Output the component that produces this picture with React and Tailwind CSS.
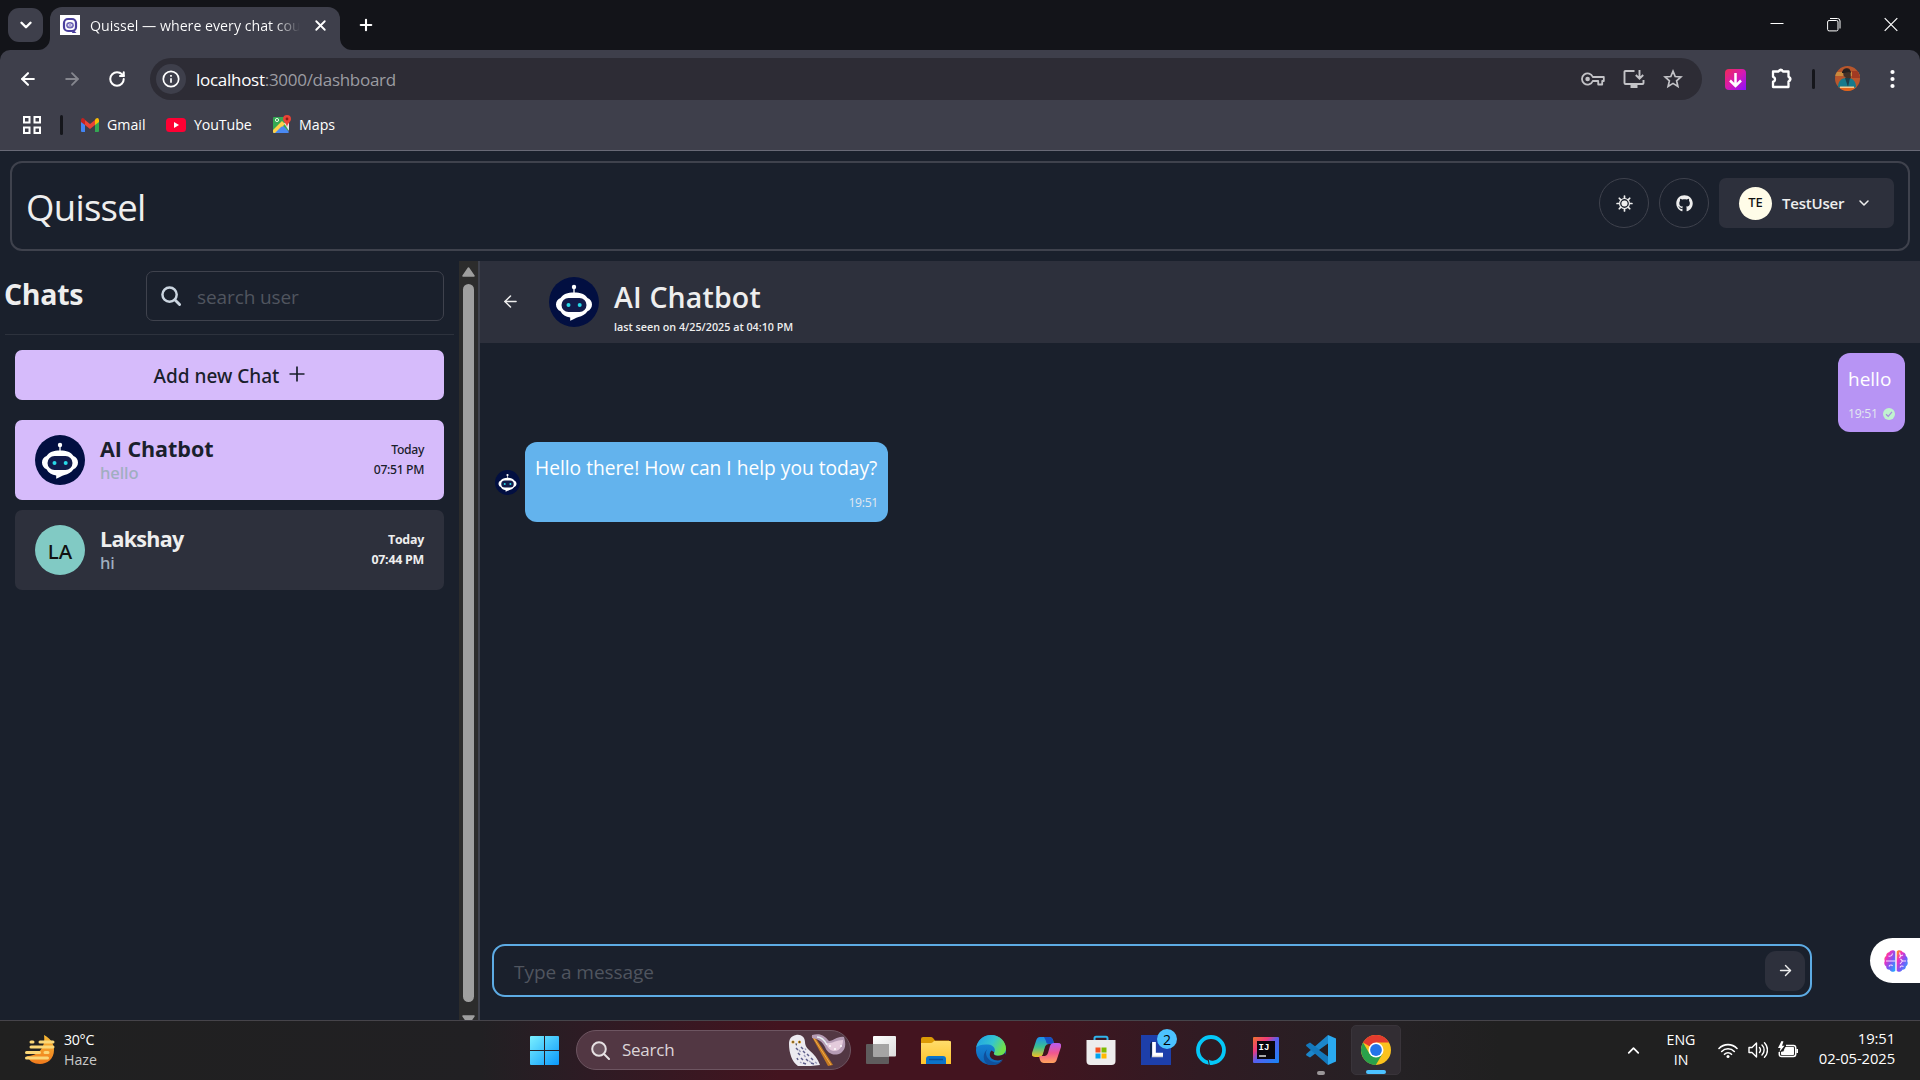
import { FaGithub } from "react-icons/fa";
import { ArrowLeft, ArrowRight, RotateCw, Plus, X, ChevronDown, ChevronUp } from "lucide-react";

function Bot({ className }) {
  return (
    <svg viewBox="0 0 50 50" className={className}>
      <circle cx="25" cy="25" r="25" fill="#020f41" />
      <circle cx="25" cy="10" r="2.2" fill="#fff" />
      <path d="M25 11v6" stroke="#fff" strokeWidth="1.3" />
      <path d="M25 15.5c6.500 0 11 1.700 13.500 5.500 2.700.800 4.500 3.500 4.500 6.500s-1.800 5.700-4.500 6.700C36.200 37.700 33 39 29.500 40c-3 1-5 2.200-8.300 3.700v-3.200c-4.500-.600-7.800-2.700-9.700-6.300C8.800 33.200 7 30.500 7 27.500s1.800-5.700 4.500-6.500c2.500-3.800 7-5.500 13.500-5.500z" fill="#fff" />
      <rect x="12.500" y="21" width="25" height="14" rx="7" fill="#121b4b" />
      <circle cx="19.500" cy="28" r="2" fill="#27d9e8" />
      <circle cx="30.700" cy="28" r="2" fill="#27d9e8" />
    </svg>
  );
}

function TabStrip() {
  return (
    <div className="flex h-[50px] items-start bg-[#131419]">
      <div className="ml-2 mt-2 flex h-[34px] w-[35px] items-center justify-center rounded-[11px] bg-[#3e3f4b]">
        <ChevronDown size={18} strokeWidth={3.200} />
      </div>
      <div className="relative ml-[7px] mt-[7px] flex h-[43px] w-[290px] items-center rounded-t-[12px] bg-[#3e3f4b] pb-[7px] pl-[10px]">
        <svg className="absolute -left-3 bottom-0" width="12" height="12"><path d="M12 0v12H0A12 12 0 0 0 12 0z" fill="#3e3f4b" /></svg>
        <svg className="absolute -right-3 bottom-0" width="12" height="12"><path d="M0 0v12h12A12 12 0 0 1 0 0z" fill="#3e3f4b" /></svg>
        <svg width="20" height="20" viewBox="0 0 20 20">
          <rect width="20" height="20" fill="#fff" />
          <rect x="4" y="4" width="12" height="12" rx="4" fill="none" stroke="#4a3f9d" strokeWidth="2.200" />
          <path d="M13 14.500l3.500 3.500h-4.500z" fill="#4a3f9d" />
          <ellipse cx="10" cy="10.200" rx="3.800" ry="3.200" fill="#6a60b5" />
          <path d="M8.300 9v2.400M10 8.200v4M11.700 9v2.400" stroke="#fff" strokeWidth=".9" />
        </svg>
        <span className="ml-[10px] mt-0.5 w-[210px] whitespace-nowrap bg-gradient-to-r from-white from-88% to-transparent bg-clip-text text-[14.200px] leading-5 text-transparent">
          Quissel — where every chat cou
        </span>
        <X size={17} strokeWidth={2.600} className="ml-[12px]" />
      </div>
      <Plus size={18} strokeWidth={2.800} className="ml-[17px] mt-4" />
      <div className="ml-auto mt-[17px] flex pr-[22px]">
        <svg width="14" height="14" viewBox="0 0 14 14" stroke="#fff" fill="none"><path d="M.5 6.500h13" /></svg>
        <svg className="ml-[43px]" width="14" height="15" viewBox="0 0 14 15" stroke="#fff" fill="none">
          <rect x=".6" y="3.500" width="10.400" height="10.400" rx="1.500" /><path d="M3 1.500h7.500a2.500 2.500 0 0 1 2.500 2.500v7.500" />
        </svg>
        <svg className="ml-[43px]" width="14" height="15" viewBox="0 0 14 15" stroke="#fff" strokeWidth="1.200"><path d="M.7 1.200l12.600 12.600M13.300 1.200L.7 13.800" /></svg>
      </div>
    </div>
  );
}

function Toolbar() {
  return (
    <div className="flex h-[58px] items-center rounded-t-[10px] bg-[#3e3f4b]">
      <ArrowLeft size={20} strokeWidth={2.500} className="ml-[18px]" />
      <ArrowRight size={20} strokeWidth={2.200} className="ml-[24px] text-[#85868e]" />
      <RotateCw size={18} strokeWidth={2.700} className="ml-[26px]" />
      <div className="ml-[24px] flex h-[42px] w-[1552px] items-center rounded-full bg-[#2d2c35] pl-1.5 pr-[19px]">
        <div className="flex h-[30px] w-[30px] items-center justify-center rounded-full bg-[#3e3f4b]">
          <svg width="18" height="18" viewBox="0 0 18 18" fill="none" stroke="#fff" strokeWidth="1.700"><circle cx="9" cy="9" r="7.700" /><path d="M9 8.200v4.500M9 5v1.700" /></svg>
        </div>
        <span className="ml-[10px] mt-px text-[17px] tracking-[-0.28px] text-[#9c9ca2]"><span className="text-white">localhost</span>:3000/dashboard</span>
        <div className="ml-auto flex items-center gap-[18px] text-[#c3c3c7]">
          <svg width="24" height="16" viewBox="0 0 24 16" fill="none" stroke="currentColor" strokeWidth="1.800"><path d="M11.800 6h11v4h-1.600v3.500h-4V10h-5.400A5.600 5.600 0 1 1 11.800 6z" strokeLinejoin="round" /><circle cx="6.600" cy="8" r="2.300" fill="currentColor" stroke="none" /></svg>
          <svg width="22" height="20" viewBox="0 0 22 20" fill="none" stroke="currentColor" strokeWidth="1.900"><path d="M11.500 2H2.500q-1 0-1 1v11q0 1 1 1h17q1 0 1-1v-3M16.500 1v8M12.800 6l3.700 3.700L20.200 6" /><path d="M7.500 17.500h7" strokeWidth="3" /></svg>
          <svg width="20" height="20" viewBox="0 0 20 20" fill="none" stroke="currentColor" strokeWidth="1.700"><path d="M10 2.200l2.200 5.300 5.700.5-4.300 3.800 1.300 5.600-4.900-3-4.900 3 1.300-5.600L2.100 8l5.700-.5z" /></svg>
        </div>
      </div>
      <svg className="ml-[23px]" width="21" height="21" viewBox="0 0 21 21">
        <defs><linearGradient id="dl" x1="0" y1="0" x2="1" y2="1"><stop offset="0" stopColor="#f02a55" /><stop offset=".5" stopColor="#d81ab0" /><stop offset="1" stopColor="#8a10ff" /></linearGradient></defs>
        <path d="M4 0h13q4 0 4 4v17H4q-4 0-4-4V4q0-4 4-4z" fill="url(#dl)" />
        <path d="M10.500 4v12M5 11.500l5.500 5.500 5.500-5.500" fill="none" stroke="#fff" strokeWidth="2.500" />
      </svg>
      <svg className="ml-[25px] mb-0.5" width="22" height="22" viewBox="0 0 22 22" fill="none" stroke="#fff" strokeWidth="2.300" strokeLinejoin="round">
        <path d="M2 4.500h5.500a2.500 2.500 0 0 1 4.500 0h5.500v5.300a2.300 2.300 0 0 1 0 4.500V20H2v-5.300a2.500 2.500 0 0 0 0-4.900z" />
        <path d="M8 3.500a2 2 0 0 1 3.600 0zM18.500 10.300a2 2 0 0 1 0 3.500z" fill="#fff" strokeWidth="1.500" />
      </svg>
      <div className="ml-[19px] h-[20px] w-[3px] rounded bg-[#15161b]" />
      <svg className="mb-0.5 ml-[20px]" width="25" height="25" viewBox="0 0 25 25">
        <clipPath id="av"><circle cx="12.500" cy="12.500" r="12.500" /></clipPath>
        <g clipPath="url(#av)">
          <rect width="25" height="25" fill="#b8562c" />
          <path d="M0 6h25v4H0z" fill="#c98a3e" /><path d="M17 5h8v7h-8z" fill="#a13a22" />
          <path d="M3 22c0-7 3-10 9-10s9 3 9 10z" fill="#157a8b" />
          <circle cx="12" cy="8" r="4" fill="#8a5a3c" /><path d="M7 7c0-5 9-6 9 0l-2-1-5 1z" fill="#1c1a1f" />
          <path d="M8 5c0-4 8-4 7 0l1 7-3 2-4-4z" fill="#2a2320" opacity=".75" />
          <path d="M10 12l3 9 2-9z" fill="#1d3e4b" /><path d="M0 21.500h25V25H0z" fill="#e0641b" /><path d="M5 20.500h14v1.500H5z" fill="#f0c88f" />
        </g>
      </svg>
      <svg className="ml-[30px]" width="5" height="20" viewBox="0 0 5 20" fill="#fff"><circle cx="2.500" cy="3" r="2.100" /><circle cx="2.500" cy="10" r="2.100" /><circle cx="2.500" cy="17" r="2.100" /></svg>
    </div>
  );
}

function Bookmarks() {
  return (
    <div className="flex h-[43px] items-center border-b border-[#686976] bg-[#3e3f4b] pb-[8px] text-[14.200px]">
      <svg className="ml-[23px]" width="18" height="18" viewBox="0 0 18 18" fill="none" stroke="#fff" strokeWidth="2"><path d="M1 1h5.500v5.500H1zM11.500 1H17v5.500h-5.500zM1 11.500h5.500V17H1zM11.500 11.500H17V17h-5.500z" /></svg>
      <div className="ml-[19px] h-[20px] w-[3px] rounded bg-[#15161b]" />
      <svg className="ml-[18px]" width="18" height="14" viewBox="0 0 18 14">
        <path d="M0 2.500l4 3V14H1q-1 0-1-1z" fill="#4285f4" /><path d="M18 2.500l-4 3V14h3q1 0 1-1z" fill="#34a853" />
        <path d="M4 2l5 4 5-4v5l-5 4-5-4z" fill="#ea4335" /><path d="M0 2q.5-3 3-1.500L4 1.500V7L0 4z" fill="#c5221f" /><path d="M18 2q-.5-3-3-1.500l-1 1V7l4-3z" fill="#fbbc04" />
      </svg>
      <span className="ml-[8px] w-[38px] whitespace-nowrap">Gmail</span>
      <svg className="ml-[21px]" width="20" height="14" viewBox="0 0 20 14"><rect width="20" height="14" rx="3.500" fill="#ff0033" /><path d="M8 4l5 3-5 3z" fill="#fff" /></svg>
      <span className="ml-[8px] w-[57px] whitespace-nowrap tracking-[-0.1px]">YouTube</span>
      <svg className="ml-[22px] mb-0.5" width="18" height="18" viewBox="0 0 18 18">
        <path d="M0 3q0-1 1-1h14v15q0 1-1 1H1q-1 0-1-1z" fill="#34a853" /><path d="M8.500 9L16 17q0 1-2 1H1z" fill="#4a89f3" /><path d="M0 15l9-9 3 3-9 9H1q-1 0-1-1z" fill="#ffd04b" /><path d="M2 18l6.500-6.500L15 18z" fill="#4a89f3" /><path d="M11 8l5-1v9z" fill="#e8eaed" />
        <path d="M14 0a4 4 0 0 1 4 4c0 3-3.500 4-4 8-.5-4-4-5-4-8a4 4 0 0 1 4-4z" fill="#ea4335" /><circle cx="14" cy="4" r="1.400" fill="#8c1d18" /><circle cx="4" cy="5" r="1.600" fill="none" stroke="#e8f5e9" />
      </svg>
      <span className="ml-[8px]">Maps</span>
    </div>
  );
}

function Header() {
  return (
    <div className="mx-[10px] mt-[10px] flex h-[90px] items-center rounded-[12px] border-2 border-[#3f424d] pl-[14px] pr-[14px]">
      <h1 className="mt-[3px] text-[36.500px] leading-none tracking-[-0.7px] text-[#eeeeee]">Quissel</h1>
      <div className="mb-[6px] ml-auto flex h-[50px] w-[50px] items-center justify-center rounded-full border border-[#3f424d]">
        <svg width="17" height="17" viewBox="0 0 24 24" fill="#eee" stroke="#eee" strokeWidth="2.400" strokeLinecap="round">
          <circle cx="12" cy="12" r="4.300" stroke="none" /><circle cx="12" cy="12" r="7" fill="none" strokeWidth="1.600" />
          <path d="M12 1.500v3M12 19.500v3M1.500 12h3M19.500 12h3M4.600 4.600l2 2M17.400 17.400l2 2M4.600 19.400l2-2M17.400 6.600l2-2" />
        </svg>
      </div>
      <div className="mb-[6px] ml-[10px] flex h-[50px] w-[50px] items-center justify-center rounded-full border border-[#3f424d] text-[#eee]"><FaGithub size={17} /></div>
      <div className="mb-[6px] ml-[10px] flex h-[50px] w-[175px] items-center rounded-[7px] bg-[#2d303c] pl-5">
        <div className="flex h-[33px] w-[33px] items-center justify-center rounded-full bg-[#fffce8] font-['Noto_Sans'] text-[13px] font-medium text-[#111]">TE</div>
        <span className="ml-[10px] w-[74px] text-[15px] font-semibold tracking-[-0.2px] text-[#eee]">TestUser</span>
        <ChevronDown size={16} strokeWidth={2.300} className="text-[#eee]" />
      </div>
    </div>
  );
}

function ChatRow({ active, avatar, name, nameClass, text, time }) {
  return (
    <div className={"mx-[15px] flex h-[80px] items-center rounded-[7px] px-[20px] " + (active ? "bg-[#d6bbfb] text-[#1a202c]" : "bg-[#2d303c] text-[#eeeeee]")}>
      {avatar}
      <div className="mb-[2px] ml-[15px]">
        <div className={"text-[21.500px] font-bold leading-[27px] " + nameClass}>{name}</div>
        <div className="font-['Noto_Sans'] text-[16.600px] font-medium leading-[22px] tracking-[-0.1px] text-[#a0aec0]">{text}</div>
      </div>
      <div className={"ml-auto text-right leading-[20px] " + (active ? "font-['Noto_Sans'] text-[12.200px] font-medium tracking-[-0.35px]" : "text-[12.400px] font-bold tracking-[-0.25px]")}>
        <div>Today</div>
        <div>{time}</div>
      </div>
    </div>
  );
}

function Sidebar() {
  return (
    <div className="flex w-[480px] border-r-2 border-[#3f424d]">
      <div className="w-[459px]">
        <div className="ml-[5px] mr-[5px] flex h-[74px] items-center justify-between border-b border-[#2d323d] pb-[4px] pr-[10px]">
          <h2 className="-ml-px mb-[2px] text-[28.500px] font-bold tracking-[-0.3px] text-[#eeeeee]">Chats</h2>
          <div className="flex h-[50px] w-[298px] items-center rounded-[7px] border border-[#3f424d] pl-[14px]">
            <svg width="20" height="20" viewBox="0 0 21 21" fill="none" stroke="#cbd5e0" strokeWidth="2.600" strokeLinecap="round"><circle cx="9" cy="9" r="7.500" /><path d="M14.500 14.500l5 5" strokeWidth="3" /></svg>
            <span className="ml-4 mt-[4px] text-[19px] tracking-[-0.1px] text-[#50555f]">search user</span>
          </div>
        </div>
        <div className="mx-[15px] mb-5 mt-[15px] flex h-[50px] items-center justify-center gap-[10px] rounded-[7px] bg-[#d6bbfb] font-['Noto_Sans'] text-[19px] font-medium text-[#1a202c]">
          <span className="mt-[2px]">Add new Chat</span>
          <svg width="16" height="16" viewBox="0 0 16 16" stroke="#1a202c" strokeWidth="1.700" className="mb-0.5"><path d="M8 .5v15M.5 8h15" /></svg>
        </div>
        <ChatRow active avatar={<Bot className="h-[50px] w-[50px]" />} name="AI Chatbot" nameClass="tracking-[-0.05px]" text="hello" time="07:51 PM" />
        <div className="h-[10px]" />
        <ChatRow avatar={<div className="flex h-[50px] w-[50px] items-center justify-center rounded-full bg-[#81cac4] pt-0.5 font-['Noto_Sans'] text-[20.500px] font-medium text-[#111]">LA</div>} name="Lakshay" nameClass="tracking-[-0.7px]" text="hi" time="07:44 PM" />
      </div>
      <div className="flex w-[19px] flex-col items-center overflow-hidden bg-[#2c2c2c]">
        <svg className="mt-[6px] shrink-0" width="13" height="10" viewBox="0 0 13 10"><path d="M6.500 1L12 9H1z" fill="#9f9f9f" stroke="#9f9f9f" strokeLinejoin="round" strokeWidth="1.500" /></svg>
        <div className="mt-[7px] h-[718px] w-[11px] shrink-0 rounded-full bg-[#9f9f9f]" />
        <svg className="mt-[13px] shrink-0" width="13" height="10" viewBox="0 0 13 10"><path d="M6.500 9L12 1H1z" fill="#9f9f9f" stroke="#9f9f9f" strokeLinejoin="round" strokeWidth="1.500" /></svg>
      </div>
    </div>
  );
}

function Brain() {
  return (
    <svg width="24" height="22" viewBox="0 0 24 22" className="shrink-0">
      <defs><linearGradient id="br" x1="0" y1="0" x2="1" y2="1"><stop offset=".08" stopColor="#ff8a2a" /><stop offset=".28" stopColor="#f52fbb" /><stop offset=".58" stopColor="#7b55f6" /><stop offset="1" stopColor="#18b4ff" /></linearGradient></defs>
      <path d="M11.300 1.500v19.200c-1.200 1.600-4.500 1.600-5.600-.9-2 .2-3.700-1.300-3.500-3.300C.3 15.500-.3 13 .8 11 -.1 9 .5 6.800 2.200 6 2 3.800 3.500 2.300 5.200 2.200 6.300-.2 10 -.5 11.300 1.500z" fill="url(#br)" />
      <path d="M12.700 1.500v19.200c1.200 1.600 4.500 1.600 5.600-.9 2 .2 3.700-1.300 3.500-3.300 1.900-1 2.500-3.500 1.400-5.500.9-2 .3-4.200-1.400-5 .2-2.200-1.300-3.700-3-3.800C17.700-.2 14 -.5 12.700 1.500z" fill="url(#br)" />
      <path d="M2 11h9.500M8.500 3.500C8 6 6 6.500 4.500 6M5 16.500c.5-2 3-2 3.500-.5M15.500 2.500l1 3.500 2.500-1M16.500 6l-1 2M22 11h-3.500l-2-2M18.500 11l-2.500 3M19.500 16.500c-1.500-1-3-.5-3.500 1" fill="none" stroke="#f7dcff" strokeWidth="1.100" />
    </svg>
  );
}

function Conversation() {
  return (
    <div className="flex flex-1 flex-col">
      <div className="flex h-[82px] items-start bg-[#2d303c]">
        <ArrowLeft size={19} strokeWidth={1.900} className="ml-[21px] mt-[31px] text-[#eee]" />
        <Bot className="ml-[29px] mt-4 h-[50px] w-[50px]" />
        <div className="ml-[15px] mt-[17px]">
          <div className="text-[28.500px] font-semibold leading-[38px] tracking-[0.15px] text-[#eeeeee]">AI Chatbot</div>
          <div className="mt-[4px] text-[10.750px] font-semibold leading-[14px] text-[#eeeeee]">last seen on 4/25/2025 at 04:10 PM</div>
        </div>
      </div>
      <div className="flex flex-1 flex-col">
        <div className="mr-[15px] mt-[10px] flex h-[79px] w-[67px] flex-col self-end rounded-[12px] bg-[#b794f4] px-[10px] pt-[13px] text-white">
          <div className="text-[19px] leading-[26px]">hello</div>
          <div className="mt-[13px] flex items-center gap-[5px] whitespace-nowrap text-[12.200px] leading-[18px] tracking-[-0.3px] text-[#e2e8f0]">
            19:51
            <svg width="12" height="12" viewBox="0 0 12 12" className="shrink-0"><circle cx="6" cy="6" r="6" fill="#c0f3cf" /><path d="M3 6.300l2.200 2L9 3.800" fill="none" stroke="#a98be0" strokeWidth="1.200" /></svg>
          </div>
        </div>
        <div className="ml-[15px] mt-[10px] flex items-center">
          <Bot className="mt-[1px] h-[25px] w-[25px]" />
          <div className="ml-[5px] h-[80px] w-[363px] whitespace-nowrap rounded-[12px] bg-[#63b3ed] px-[10px] pt-[13px] text-white">
            <div className="text-[19.200px] leading-[26px]">Hello there! How can I help you today?</div>
            <div className="mt-[13px] text-right text-[12.200px] leading-[18px] tracking-[-0.3px] text-[#e2e8f0]">19:51</div>
          </div>
        </div>
        <div className="mb-[17px] mt-auto flex items-center justify-between">
          <div className="ml-[12px] flex h-[53px] w-[1320px] items-center justify-between rounded-[13px] border-2 border-[#5dabe4] pl-[20px] pr-[5px]">
            <span className="mt-1 text-[19px] tracking-[-0.05px] text-[#50555f]">Type a message</span>
            <div className="flex h-[40px] w-[40px] items-center justify-center rounded-[11px] bg-[#2d303c]"><ArrowRight size={17} strokeWidth={2} className="text-[#eee]" /></div>
          </div>
          <div className="mb-[20px] flex h-[45px] w-[50px] items-center rounded-l-full bg-white pl-[14px]">
            <Brain />
          </div>
        </div>
      </div>
    </div>
  );
}

const slot = "flex h-[50px] w-[50px] shrink-0 items-center justify-center";

function Taskbar() {
  return (
    <div className="flex h-[60px] items-center border-t border-[#46444a] pb-px bg-[linear-gradient(90deg,#202020_0px,#212023_480px,#2e1b24_590px,#43141f_780px,#43141f_1020px,#301b23_1200px,#242124_1400px,#202020_1500px)]">
      <div className="flex w-[530px] items-center">
        <svg className="ml-[24px]" width="32" height="32" viewBox="0 0 32 32">
          <defs><linearGradient id="mo" x1="0" y1="0" x2="0" y2="1"><stop offset="0" stopColor="#f6b935" /><stop offset="1" stopColor="#f07a1c" /></linearGradient></defs>
          <path d="M20 1c6 3 10 8 10 15 0 9-7 14-14 14-6 0-11-3-13-8 10 0 19-7 17-21z" fill="url(#mo)" />
          <path d="M7 8h2M16 8h13M7 13h22M2.500 18.500h13M21 18.500h3M2.500 24h21" stroke="#fbd777" strokeWidth="3" strokeLinecap="round" />
        </svg>
        <div className="ml-[8px] text-[14.200px] leading-[20px]">
          <div className="tracking-[-0.3px]">30°C</div>
          <div className="text-[#c8c8c8]">Haze</div>
        </div>
      </div>
      <svg width="29" height="29" viewBox="0 0 29 29">
        <defs><linearGradient id="wi" x1="0" y1="0" x2="1" y2="1"><stop offset="0" stopColor="#7af0ff" /><stop offset="1" stopColor="#0a98fb" /></linearGradient></defs>
        <path d="M1 0h13v14H0V1q0-1 1-1zM15 0h13q1 0 1 1v13H15zM0 15h14v14H1q-1 0-1-1zM15 15h14v13q0 1-1 1H15z" fill="url(#wi)" />
      </svg>
      <div className="ml-[17px] flex h-[40px] w-[275px] items-center rounded-full border border-[#6d5561] bg-[#523743] pl-[14px] pr-[3px]">
        <svg width="19" height="19" viewBox="0 0 19 19" fill="none" stroke="#e6e1e3" strokeWidth="2" strokeLinecap="round"><circle cx="8" cy="8" r="6.800" fill="#6c5560" /><path d="M13 13l5 5" /></svg>
        <span className="ml-[12px] text-[17px] tracking-[-0.25px] text-[#dcd5d8]">Search</span>
        <svg className="ml-auto mr-[1px]" width="58" height="33" viewBox="0 0 58 33">
          <path d="M8 1c5-1 9 2 9 7 0 3 1 5 4 8 5 4 9 9 11 15l-9 1H10C4 28 1 19 1 10c0-5 2-8 7-9z" fill="#eceaf0" />
          <path d="M8 14l2 2M13 13l2 2M10 19l2 2M15 17l2 2M19 20l2 2M13 24l2 2M18 25l2 2M23 24l2 2M23 29l3 1M15 29l3 1M9 24l1 2" stroke="#5d5d89" strokeWidth="1.500" />
          <path d="M11 16l1.500 2M16 21l1.500 2M21 27l2 1.500M12 28l1.500 1M27 28l2 1.500M17 14.500l1 1.500" stroke="#9c9cba" strokeWidth="1.300" />
          <circle cx="5" cy="8" r="1.600" fill="#e6a52b" /><circle cx="11.500" cy="8" r="1.600" fill="#e6a52b" /><circle cx="5" cy="8" r=".8" fill="#222" /><circle cx="11.500" cy="8" r=".8" fill="#222" /><path d="M7.300 9.500h2L8.200 12z" fill="#44404a" />
          <path d="M23.500 2l2.500-.5L45 31l-5 1z" fill="#c67a20" /><path d="M25 3l18 28" stroke="#f0ac4c" />
          <path d="M24 1c8-2 12 0 17 6 5 0 8-5 15-4 2 7 2 12-3 16-7 4-14 0-16-6-3-6-7-8-13-9z" fill="#b59cb5" /><path d="M38 9c6 1 10-3 17-3 0 6-3 11-9 11-4 0-7-4-8-8z" fill="#e4cbdc" /><path d="M29 3c5 0 8 4 10 8" stroke="#e6eef2" strokeWidth="1.500" fill="none" />
          <circle cx="47" cy="15" r="1" fill="#fff" /><circle cx="53" cy="12" r="1" fill="#fff" /><circle cx="42" cy="12" r=".9" fill="#fff" />
        </svg>
      </div>
      <div className="ml-[5px] flex items-center gap-[5px]">
        <div className={slot}>
          <svg width="30" height="28" viewBox="0 0 30 28">
            <defs><linearGradient id="tv" x1="0" y1="0" x2="1" y2="1"><stop offset="0" stopColor="#fff" /><stop offset="1" stopColor="#dcdcdc" /></linearGradient></defs>
            <rect y="8" width="23" height="20" rx="1" fill="#5f5c5d" /><rect x="7" width="23" height="20.500" rx="1" fill="url(#tv)" /><path d="M7 8h16v12.500H7z" fill="#a5a4a4" />
          </svg>
        </div>
        <div className={slot}>
          <svg width="30" height="27" viewBox="0 0 30 27">
            <defs><linearGradient id="fo" x1="0" y1="0" x2="0" y2="1"><stop offset="0" stopColor="#ffdc6b" /><stop offset="1" stopColor="#ffc42b" /></linearGradient></defs>
            <path d="M0 2q0-2 2-2h8q1 0 2 1l2 2.500H28V10H0z" fill="#dc9a06" /><path d="M0 6h10q1 0 2-1l1-1h16q1 0 1 1v22H0z" fill="url(#fo)" /><path d="M5 27v-5q0-3 3-3h14q3 0 3 3v5z" fill="#0b74cb" /><path d="M8 22.500h14" stroke="#0a4f98" strokeWidth="1.500" />
          </svg>
        </div>
        <div className={slot}>
          <svg width="30" height="30" viewBox="0 0 30 30">
            <defs>
              <linearGradient id="e1" x1="0" y1="0" x2="1" y2=".4"><stop offset=".1" stopColor="#22a4e4" /><stop offset=".6" stopColor="#35c5cf" /><stop offset="1" stopColor="#6fe04c" /></linearGradient>
              <linearGradient id="e2" x1="0" y1="0" x2="0" y2="1"><stop offset="0" stopColor="#1a8fe0" /><stop offset="1" stopColor="#0c65b8" /></linearGradient>
            </defs>
            <circle cx="15" cy="15" r="15" fill="url(#e2)" />
            <path d="M.2 12.500C1.500 5 7.500 0 15 0c9 0 15 7 15 13.500 0 5-4 7.300-7.500 7.300-4 0-5.500-1.500-4.200-3.500 1.700-2.800-.3-7.300-6.300-7.800C7 9 2 10 .2 12.500z" fill="url(#e1)" />
            <path d="M10 17c-.5 6 5 10.500 11 10.500 3 0 5-1.500 6.500-3.500C24 31 15 31 12 29.500 7 27 6 19 11 14.500z" fill="#104f9b" />
            <path d="M18.300 17.300c-1.300 2 .2 3.500 4.200 3.500 2.500 0 5-.8 6.500-3L30 22l-2.500 2c-3 2-9 2-12-.5-2.500-2.500-2-6 0-8z" fill="#421521" />
          </svg>
        </div>
        <div className={slot}>
          <svg width="29" height="26" viewBox="0 0 29 26">
            <defs>
              <linearGradient id="c1" x1="0" y1="0" x2="0" y2="1"><stop offset="0" stopColor="#1b8df0" /><stop offset=".5" stopColor="#3cc08f" /><stop offset="1" stopColor="#f2c024" /></linearGradient>
              <linearGradient id="c2" x1="0" y1="0" x2="0" y2="1"><stop offset="0" stopColor="#b75cf2" /><stop offset=".5" stopColor="#f0568f" /><stop offset="1" stopColor="#ffa45c" /></linearGradient>
            </defs>
            <path d="M8 0h9q3 0 4 3l1 4h-5q-3 0-4 3l-2 7q-1 3-4 3H3q-4 0-3-4L4 4q1-4 4-4z" fill="url(#c1)" /><path d="M12 0h5q3 0 4 3l1 4h-5q-3 0-3-3z" fill="#1750c4" />
            <path d="M21 26h-9q-3 0-4-3l-1-4h5q3 0 4-3l2-7q1-3 4-3h4q4 0 3 4l-4 12q-1 4-4 4z" fill="url(#c2)" />
            <path d="M13.500 9.500h3.200q-1 1-1.500 3l-1.700 5q-.5 1.500-1.500 1.500H10q1-.5 1.500-2.500z" fill="#43141f" />
          </svg>
        </div>
        <div className={slot}>
          <svg width="30" height="30" viewBox="0 0 30 30">
            <path d="M8.500 6V3.200q0-1.500 1.500-1.500h10q1.500 0 1.500 1.500V6" fill="none" stroke="#31b5ec" strokeWidth="2" />
            <path d="M.5 5h29v21q0 4-4 4h-21q-4 0-4-4z" fill="#ededed" /><path d="M9.500 12.500h5v5h-5z" fill="#f25022" /><path d="M15.500 12.500h5v5h-5z" fill="#7fba00" /><path d="M9.500 18.500h5v5h-5z" fill="#00a4ef" /><path d="M15.500 18.500h5v5h-5z" fill="#ffb900" />
          </svg>
        </div>
        <div className={slot + " relative"}>
          <svg width="30" height="30" viewBox="0 0 30 30"><rect width="30" height="30" fill="#1d3faa" /><path d="M11 6v13l-2 5V9z" fill="#0d2450" /><path d="M13 7v12.500h9" fill="none" stroke="#fff" strokeWidth="3.700" /><path d="M11 21.500h11" stroke="#d9d9d9" strokeWidth="1.500" /></svg>
          <div className="absolute left-[26px] top-[4px] flex h-[20px] w-[20px] items-center justify-center rounded-full bg-[#4cc2ff] text-[14px] text-black">2</div>
        </div>
        <div className={slot}>
          <svg width="30" height="30" viewBox="0 0 30 30" fill="none"><circle cx="15" cy="15" r="13" stroke="#05c8f8" strokeWidth="3.800" /><path d="M12.500 24.500q0 2.500 1.500 5.500l2-.2q5-2.800 7-5.800-6 3.500-10.500.5z" fill="#05c8f8" /><path d="M12.300 25l1 5.200" stroke="#2e1b23" strokeWidth="1" /></svg>
        </div>
        <div className={slot}>
          <svg width="26" height="26" viewBox="0 0 26 26">
            <defs><linearGradient id="ij" x1="0" y1="0" x2="1" y2="1"><stop offset="0" stopColor="#f0742d" /><stop offset=".3" stopColor="#f03a7b" /><stop offset=".5" stopColor="#5660f0" /><stop offset="1" stopColor="#1685f5" /></linearGradient></defs>
            <rect width="26" height="26" rx="1" fill="url(#ij)" /><rect x="4" y="4" width="18" height="18" fill="#09060e" /><text x="5.500" y="12.500" fill="#fff" fontSize="9" fontWeight="bold" className="font-[Liberation_Mono]">IJ</text><path d="M6 19h7" stroke="#fff" strokeWidth="1.300" />
          </svg>
        </div>
        <div className={slot + " relative"}>
          <svg width="30" height="30" viewBox="0 0 30 30">
            <path d="M22 0L30 3.500v23L22 30z" fill="#2aa9ef" /><path d="M22 0v9L4 22.500l-3.500-2q-.8-1 0-1.800z" fill="#1c86ca" /><path d="M22 30v-9L4 7.500l-3.500 2q-.8 1 0 1.800z" fill="#1479bd" /><path d="M22 8.500v13L13 15z" fill="#241f24" />
          </svg>
          <div className="absolute bottom-0 left-[21px] h-1 w-2 rounded-full bg-[#9b9799]" />
        </div>
        <div className={slot + " relative rounded-[5px] border border-[#39343a] bg-[#322d33]"}>
          <svg width="30" height="30" viewBox="0 0 30 30">
            <circle cx="15" cy="15" r="15" fill="#fbc21d" />
            <path d="M15 15L2 7.500A15 15 0 0 1 28 7.500H15z" fill="#e33b2e" /><path d="M2 7.500A15 15 0 0 0 14.800 30L21.500 18.750 8.500 18.750z" fill="#2aa14b" />
            <circle cx="15" cy="15" r="7.500" fill="#fff" /><circle cx="15" cy="15" r="5.900" fill="#2474e8" />
          </svg>
          <div className="absolute bottom-0 left-[14px] h-1 w-5 rounded-full bg-[#4cc2ff]" />
        </div>
      </div>
      <ChevronUp size={19} strokeWidth={2.200} className="ml-[223px]" />
      <div className="mb-px ml-[19px] w-[38px] text-center text-[14.200px] leading-5">ENG<br />IN</div>
      <svg className="ml-[18px]" width="20" height="17" viewBox="0 0 20 17" fill="none" stroke="#fff" strokeWidth="1.600" strokeLinecap="round"><path d="M1 6.500a12.500 12.500 0 0 1 18 0M3.700 9.500a8.700 8.700 0 0 1 12.600 0M6.500 12.300a5 5 0 0 1 7 0" /><circle cx="10" cy="14.500" r="1.500" fill="#fff" stroke="none" /></svg>
      <svg className="ml-[10px]" width="20" height="18" viewBox="0 0 20 18" fill="none" stroke="#fff" strokeWidth="1.400" strokeLinejoin="round" strokeLinecap="round"><path d="M1 6.500h3L8.500 2v14L4 11.500H1zM11.500 6.500a4 4 0 0 1 0 5M14 4a7 7 0 0 1 0 10M16.500 1.700a10.500 10.500 0 0 1 0 14.600" /></svg>
      <svg className="ml-[10px]" width="21" height="18" viewBox="0 0 21 18"><path d="M8 4.500h7.500q2.200 0 2.200 2.200v6.600q0 2.200-2.200 2.200H3.500Q1.300 15.500 1.300 13.300V11" fill="none" stroke="#fff" strokeWidth="1.500" /><path d="M7.500 6.500h8v7h-12V11h2.200z" fill="#fff" stroke="#fff" /><path d="M18.300 8h1.700v4h-1.700z" fill="#fff" /><path d="M3.500 0L0 7h2.500L1.500 11 6.500 4.700H4L5.500.5z" fill="#fff" /></svg>
      <div className="mb-1 ml-auto mr-[25px] text-right text-[14.800px] leading-5 tracking-[-0.1px]">19:51<br />02-05-2025</div>
    </div>
  );
}

export default function App() {
  return (
    <div className="flex h-[1080px] w-[1920px] flex-col overflow-hidden bg-[#131419] font-['Open_Sans','Noto_Sans',sans-serif] text-white">
      <TabStrip />
      <Toolbar />
      <Bookmarks />
      <div className="flex h-[869px] flex-col bg-[#1a202c]">
        <Header />
        <div className="mt-[10px] flex min-h-0 flex-1">
          <Sidebar />
          <Conversation />
        </div>
      </div>
      <Taskbar />
    </div>
  );
}
